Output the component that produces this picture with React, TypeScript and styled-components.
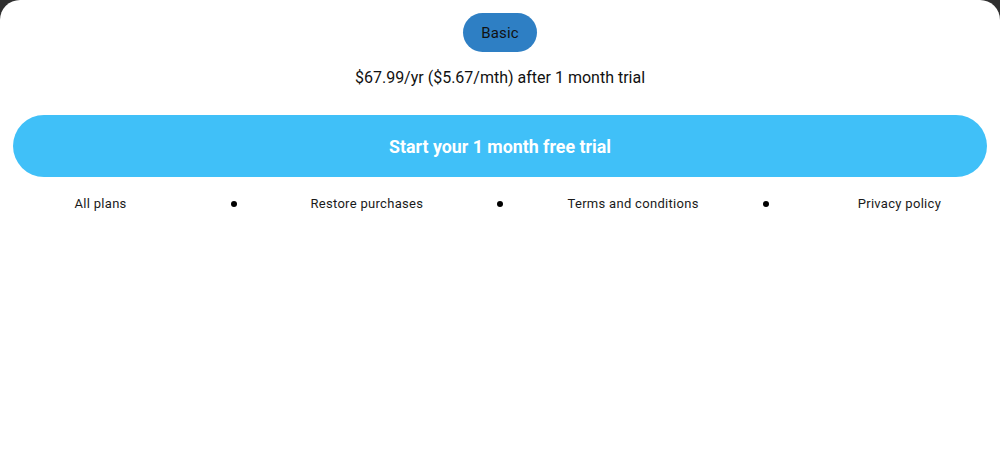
import React from "react";
import styled, { createGlobalStyle } from "styled-components";

const Global = createGlobalStyle`
  html, body { margin: 0; padding: 0; background: #303030; }
  body { font-family: Roboto, "Liberation Sans", sans-serif; }
`;

const Sheet = styled.div`
  width: 1000px;
  height: 450px;
  box-sizing: border-box;
  background: #ffffff;
  border-radius: 20px 20px 0 0;
  display: flex;
  flex-direction: column;
  align-items: center;
  padding: 13px 13px 0;
`;

const Badge = styled.div`
  height: 39px;
  width: 74px;
  border-radius: 20px;
  background: #2e7fc4;
  color: #111;
  font-size: 15px;
  letter-spacing: 0.2px;
  display: flex;
  align-items: center;
  justify-content: center;
`;

const Price = styled.div`
  margin-top: 16px;
  font-size: 16px;
  line-height: 20px;
  color: #111;
`;

const Cta = styled.button`
  margin-top: 27px;
  width: 100%;
  height: 62px;
  border: none;
  border-radius: 31px;
  background: #40c0f8;
  color: #ffffff;
  font-family: Roboto, "Liberation Sans", sans-serif;
  font-weight: 700;
  font-size: 17.8px;
  cursor: pointer;
`;

const Links = styled.div`
  margin-top: 17px;
  width: 932px;
  display: grid;
  grid-template-columns: repeat(7, 1fr);
  align-items: center;
  font-size: 13px;
  letter-spacing: 0.3px;
  line-height: 20px;
  color: #1a1a1a;
`;

const LinkItem = styled.span`
  text-align: center;
  white-space: nowrap;
`;

const Dot = styled.span`
  justify-self: center;
  width: 6px;
  height: 6px;
  border-radius: 50%;
  background: #000;
`;

export default function App() {
  const items = ["All plans", "Restore purchases", "Terms and conditions", "Privacy policy"];
  return (
    <>
      <Global />
      <Sheet>
        <Badge>Basic</Badge>
        <Price>$67.99/yr ($5.67/mth) after 1 month trial</Price>
        <Cta>Start your 1 month free trial</Cta>
        <Links>
          {items.map((t, i) => (
            <React.Fragment key={t}>
              {i > 0 && <Dot />}
              <LinkItem>{t}</LinkItem>
            </React.Fragment>
          ))}
        </Links>
      </Sheet>
    </>
  );
}
